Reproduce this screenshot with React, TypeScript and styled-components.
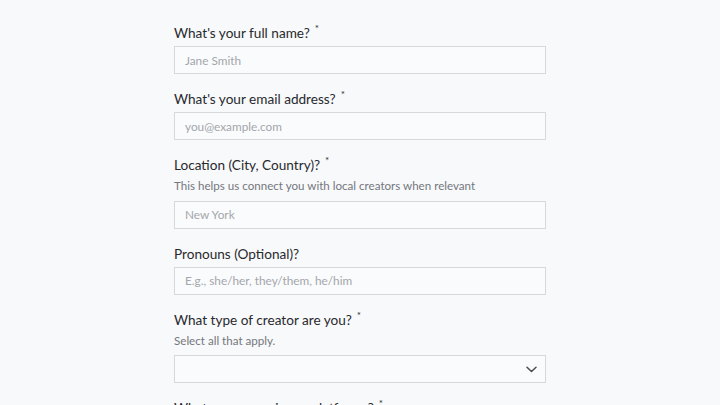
import React from "react";
import styled, { createGlobalStyle } from "styled-components";

const Global = createGlobalStyle`
  html, body { margin: 0; padding: 0; background: #f8f9fb; }
  body { font-family: "Lato", "Open Sans", sans-serif; }
  * { box-sizing: border-box; }
`;

const Page = styled.div`
  min-height: 405px;
  background: #f8f9fb;
  display: flex;
  justify-content: center;
  padding-top: 23px;
`;

const Form = styled.form`
  width: 372px;
  display: flex;
  flex-direction: column;
  gap: 15px;
`;

const Field = styled.div`
  display: flex;
  flex-direction: column;
`;

const Label = styled.label`
  font-size: 13.6px;
  line-height: 20px;
  color: #28292d;
  font-weight: 400;
  margin-bottom: 3px;
  white-space: nowrap;
`;

const Req = styled.sup`
  font-size: 10px;
  margin-left: 5px;
  color: #2f3135;
  vertical-align: 6px;
  line-height: 0;
`;

const Help = styled.div`
  font-size: 11.6px;
  line-height: 16px;
  color: #74777d;
  margin: 0 0 6.5px;
`;

const Input = styled.input`
  height: 28px;
  width: 100%;
  border: 1.5px solid #d6d8dc;
  background: #fafbfc;
  padding: 0 10px;
  font-family: inherit;
  font-size: 11.8px;
  color: #333;
  outline: none;
  border-radius: 0;
  &::placeholder { color: #a3a6ab; }
`;

const SelectBox = styled.div`
  height: 28px;
  width: 100%;
  border: 1.5px solid #d6d8dc;
  background: #fafbfc;
  display: flex;
  align-items: center;
  justify-content: flex-end;
  padding-right: 8px;
  color: #4a4c50;
`;

const Chevron = () => (
  <svg width="11" height="7" viewBox="0 0 11 7" fill="none" stroke="currentColor" strokeWidth="1.5" strokeLinecap="round" strokeLinejoin="round">
    <path d="M1 1.2 5.5 5.5 10 1.2" />
  </svg>
);

type F = { label: string; req?: boolean; help?: string; ph?: string; select?: boolean };

const fields: F[] = [
  { label: "What's your full name?", req: true, ph: "Jane Smith" },
  { label: "What's your email address?", req: true, ph: "you@example.com" },
  { label: "Location (City, Country)?", req: true, help: "This helps us connect you with local creators when relevant", ph: "New York" },
  { label: "Pronouns (Optional)?", ph: "E.g., she/her, they/them, he/him" },
  { label: "What type of creator are you?", req: true, help: "Select all that apply.", select: true },
  { label: "What are your primary platforms?", req: true, ph: "" },
];

export default function App() {
  return (
    <>
      <Global />
      <Page>
        <Form>
          {fields.map((f) => (
            <Field key={f.label}>
              <Label>
                {f.label}
                {f.req && <Req>*</Req>}
              </Label>
              {f.help && <Help>{f.help}</Help>}
              {f.select ? (
                <SelectBox>
                  <Chevron />
                </SelectBox>
              ) : (
                <Input placeholder={f.ph} />
              )}
            </Field>
          ))}
        </Form>
      </Page>
    </>
  );
}
